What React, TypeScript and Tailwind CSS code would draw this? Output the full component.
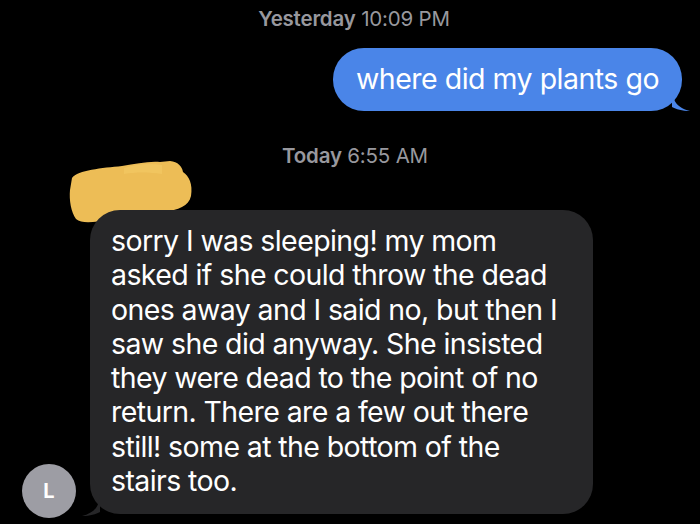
import React from 'react';

const font = { fontFamily: 'Inter, "Liberation Sans", sans-serif' };

const replyLines = [
  'sorry I was sleeping! my mom',
  'asked if she could throw the dead',
  'ones away and I said no, but then I',
  'saw she did anyway. She insisted',
  'they were dead to the point of no',
  'return. There are a few out there',
  'still! some at the bottom of the',
  'stairs too.',
];

function Stamp({ day, time }: { day: string; time: string }) {
  return (
    <div className="text-center text-[20.5px] leading-[24px] text-[#98989e] tracking-[-0.2px]">
      <span className="font-semibold">{day}</span> {time}
    </div>
  );
}

function Scribble() {
  return (
    <svg width="132" height="70" viewBox="0 0 132 70" className="block">
      <path
        d="M6 22 C12 14 36 12 56 10 C70 8 82 5 94 6 L104 5 C112 6 116 10 117 16 C123 20 127 28 125 40 C123 50 112 54 98 56 C82 60 62 62 44 64 C28 66 16 68 10 63 C5 56 3 44 4 34 Z"
        fill="#edbd56"
      />
      <path d="M58 12 C70 8 84 7 96 9 L96 18 C82 16 70 16 58 18 Z" fill="#f3c966" opacity="0.6" />
    </svg>
  );
}

export default function App() {
  return (
    <div className="w-[700px] h-[524px] bg-black overflow-hidden flex flex-col" style={font}>
      <div className="pt-[7px] pl-[8px]">
        <Stamp day="Yesterday" time="10:09 PM" />
      </div>

      {/* Outgoing */}
      <div className="flex justify-end pr-[18px] mt-[17px]">
        <div className="relative">
          <div className="h-[63px] flex items-center px-[23px] rounded-[31px] bg-[#4a85e8] text-white text-[28.5px] tracking-[-0.5px]">
            where did my plants go
          </div>
          <svg width="20" height="22" viewBox="0 0 20 22" className="absolute right-[-10px] bottom-[0px]">
            <path d="M0 0 L2 10 C4 16 10 20 18 22 C10 22 4 20 0 18 Z" fill="#4a85e8" />
          </svg>
        </div>
      </div>

      <div className="mt-[33px] pl-[10px]">
        <Stamp day="Today" time="6:55 AM" />
      </div>

      <div className="pl-[66px] -mt-[12px] h-[54px]">
        <Scribble />
      </div>

      {/* Incoming */}
      <div className="flex items-end pl-[22px] gap-[14px]">
        <div className="w-[54px] h-[54px] rounded-full bg-[#9d9da4] flex items-center justify-center text-white text-[20px] font-bold mb-[-4px]">
          L
        </div>
        <div className="relative">
          <svg width="20" height="22" viewBox="0 0 20 22" className="absolute left-[-10px] bottom-[-2px]">
            <path d="M20 0 L18 10 C16 16 10 20 2 22 C10 22 16 20 20 18 Z" fill="#262628" />
          </svg>
          <div className="w-[503px] h-[304px] rounded-[30px] bg-[#262628] pl-[21px] pt-[14px] text-white text-[28.5px] leading-[34.3px] tracking-[-0.6px]">
            {replyLines.map((l) => (
              <div key={l} className="whitespace-nowrap">{l}</div>
            ))}
          </div>
        </div>
      </div>
    </div>
  );
}
